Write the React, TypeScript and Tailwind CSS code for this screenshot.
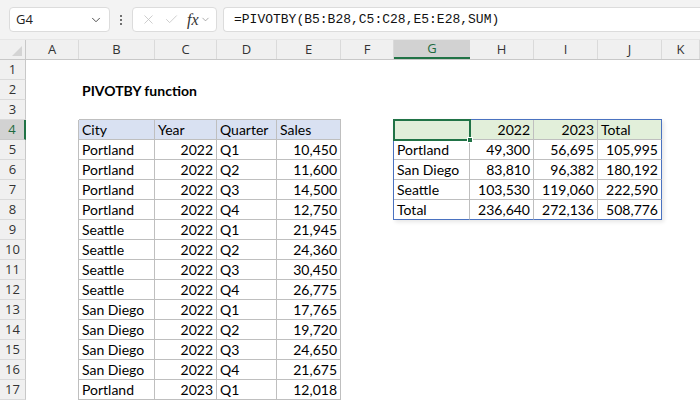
import { ChevronDown, X, Check } from "lucide-react";

const COLS = ["A", "B", "C", "D", "E", "F", "G", "H", "I", "J", "K"];
const WIDTHS = [53, 76, 62, 60, 64, 53, 76, 64, 64, 64, 38];

type CellData = { t: string; right?: boolean; bold?: boolean };

const sales: [string, number, string, string][] = [
  ["Portland", 2022, "Q1", "10,450"],
  ["Portland", 2022, "Q2", "11,600"],
  ["Portland", 2022, "Q3", "14,500"],
  ["Portland", 2022, "Q4", "12,750"],
  ["Seattle", 2022, "Q1", "21,945"],
  ["Seattle", 2022, "Q2", "24,360"],
  ["Seattle", 2022, "Q3", "30,450"],
  ["Seattle", 2022, "Q4", "26,775"],
  ["San Diego", 2022, "Q1", "17,765"],
  ["San Diego", 2022, "Q2", "19,720"],
  ["San Diego", 2022, "Q3", "24,650"],
  ["San Diego", 2022, "Q4", "21,675"],
  ["Portland", 2023, "Q1", "12,018"],
];

const pivot = [
  ["", "2022", "2023", "Total"],
  ["Portland", "49,300", "56,695", "105,995"],
  ["San Diego", "83,810", "96,382", "180,192"],
  ["Seattle", "103,530", "119,060", "222,590"],
  ["Total", "236,640", "272,136", "508,776"],
];

// which table a cell belongs to: 1 = sales (B4:E17), 2 = pivot (G4:J8)
function tableOf(r: number, c: number) {
  if (r >= 4 && r <= 17 && c >= 1 && c <= 4) return 1;
  if (r >= 4 && r <= 8 && c >= 6 && c <= 9) return 2;
  return 0;
}

function cellContent(r: number, c: number): CellData | null {
  if (r === 2 && c === 1) return { t: "PIVOTBY function", bold: true };
  if (tableOf(r, c) === 1) {
    if (r === 4) return { t: ["City", "Year", "Quarter", "Sales"][c - 1] };
    const row = sales[r - 5];
    if (c === 1) return { t: row[0] };
    if (c === 2) return { t: String(row[1]), right: true };
    if (c === 3) return { t: row[2] };
    return { t: row[3], right: true };
  }
  if (tableOf(r, c) === 2) {
    const v = pivot[r - 4][c - 6];
    const right = c > 6 && !(r === 4 && c === 9);
    return { t: v, right };
  }
  return null;
}

const GRAY = "#bfbfbf";
const BLUE = "#4a72c0";

function cellStyle(r: number, c: number) {
  const t = tableOf(r, c);
  const below = tableOf(r + 1, c);
  const right = tableOf(r, c + 1);
  let bb: string | undefined;
  let br: string | undefined;
  if (t === 1) {
    bb = GRAY;
    br = GRAY;
  } else if (t === 2) {
    bb = r === 8 ? BLUE : GRAY;
    br = c === 9 ? BLUE : GRAY;
  }
  if (!bb && below === 1) bb = GRAY;
  if (!bb && below === 2) bb = BLUE;
  if (!br && right === 1) br = GRAY;
  if (!br && right === 2) br = BLUE;
  let bg = "transparent";
  if (t === 1 && r === 4) bg = "#d9e1f2";
  if (t === 2 && r === 4) bg = "#e2efda";
  return {
    borderBottom: bb ? `1px solid ${bb}` : undefined,
    borderRight: br ? `1px solid ${br}` : undefined,
    background: bg,
  };
}

function Toolbar() {
  return (
    <div className="h-[40px] bg-[#f3f3f3] flex items-center pl-[9px] pr-0 border-b border-[#e6e6e6]">
      <div className="w-[101px] h-[25px] bg-white border border-[#dcdcdc] rounded-[4px] flex items-center justify-between pl-[6px] pr-[6px]">
        <span className="text-[13px] text-[#222] font-['Open_Sans',sans-serif]">G4</span>
        <ChevronDown className="size-[14px] text-[#444]" strokeWidth={1.6} />
      </div>
      <div className="w-[22px] flex flex-col items-center gap-[2px]">
        <span className="size-[2px] bg-[#444] rounded-full" />
        <span className="size-[2px] bg-[#444] rounded-full" />
        <span className="size-[2px] bg-[#444] rounded-full" />
      </div>
      <div className="w-[85px] h-[25px] bg-white border border-[#dcdcdc] rounded-[4px] flex items-center pl-[8px] gap-[8px]">
        <X className="size-[15px] text-[#c3c3c3]" strokeWidth={1.3} />
        <Check className="size-[15px] text-[#c3c3c3]" strokeWidth={1.3} />
        <span className="flex items-center">
          <span className="italic text-[16px] text-[#333] font-['Liberation_Serif',serif] leading-none">fx</span>
          <ChevronDown className="size-[11px] text-[#888] ml-[1px]" strokeWidth={1.5} />
        </span>
      </div>
      <div className="ml-[6px] flex-1 h-[25px] bg-white border border-[#dcdcdc] border-r-0 rounded-l-[4px] flex items-center pl-[10px]">
        <span className="text-[13px] text-[#111] font-['Liberation_Mono',monospace]">=PIVOTBY(B5:B28,C5:C28,E5:E28,SUM)</span>
      </div>
    </div>
  );
}

function ColumnHeader() {
  return (
    <div className="flex h-[20px] bg-[#f0f0f0] border-b border-[#c8c8c8] font-['Open_Sans',sans-serif] text-[13px] text-[#333]">
      <div className="w-[26px] shrink-0 border-r border-[#c8c8c8] relative">
        <div className="absolute right-[3px] bottom-[3px] w-0 h-0 border-l-[10px] border-l-transparent border-b-[10px] border-b-[#d4d4d4]" />
      </div>
      {COLS.map((c, i) => (
        <div
          key={c}
          style={{ width: WIDTHS[i] }}
          className={
            c === "G"
              ? "shrink-0 flex items-center justify-center bg-[#d2d2d2] border-b-2 border-[#217346] text-[#1e6b40] leading-none"
              : "shrink-0 flex items-center justify-center border-r border-[#dadada] leading-none"
          }
        >
          {c}
        </div>
      ))}
    </div>
  );
}

function Row({ r }: { r: number }) {
  return (
    <div className="flex h-[20px]">
      <div
        className={
          r === 4
            ? "w-[26px] shrink-0 bg-[#d2d2d2] border-r-2 border-[#217346] border-b border-b-[#c8c8c8] flex items-center justify-center text-[13px] text-[#1e6b40] font-['Open_Sans',sans-serif] leading-none"
            : "w-[26px] shrink-0 bg-[#f0f0f0] border-r border-[#c8c8c8] border-b border-b-[#dadada] flex items-center justify-center text-[13px] text-[#333] font-['Open_Sans',sans-serif] leading-none"
        }
      >
        {r}
      </div>
      {WIDTHS.map((w, c) => {
        const d = cellContent(r, c);
        return (
          <div
            key={c}
            style={{ width: w, ...cellStyle(r, c) }}
            className={
              "shrink-0 box-border flex items-end px-[3px] whitespace-nowrap text-[14px] leading-[19px] text-black font-['Lato',sans-serif] " +
              (d?.right ? "justify-end" : "justify-start") +
              (d?.bold ? " font-bold overflow-visible" : " overflow-hidden")
            }
          >
            {d?.t}
          </div>
        );
      })}
    </div>
  );
}

export default function App() {
  const rows = Array.from({ length: 17 }, (_, i) => i + 1);
  return (
    <div className="w-[700px] h-[400px] overflow-hidden bg-white">
      <Toolbar />
      <ColumnHeader />
      <div className="relative">
        {rows.map((r) => (
          <Row key={r} r={r} />
        ))}
        {/* faint shadow around the spilled pivot range */}
        <div className="absolute left-[393px] top-[59px] w-[269px] h-[101px] shadow-[2px_2px_4px_rgba(0,0,0,0.10)] pointer-events-none" />
        {/* active cell G4 */}
        <div className="absolute left-[393px] top-[59px] w-[78px] h-[22px] border-2 border-[#217346] pointer-events-none" />
        <div className="absolute left-[467px] top-[77px] w-[6px] h-[6px] bg-[#217346] border border-white pointer-events-none" />
      </div>
    </div>
  );
}
